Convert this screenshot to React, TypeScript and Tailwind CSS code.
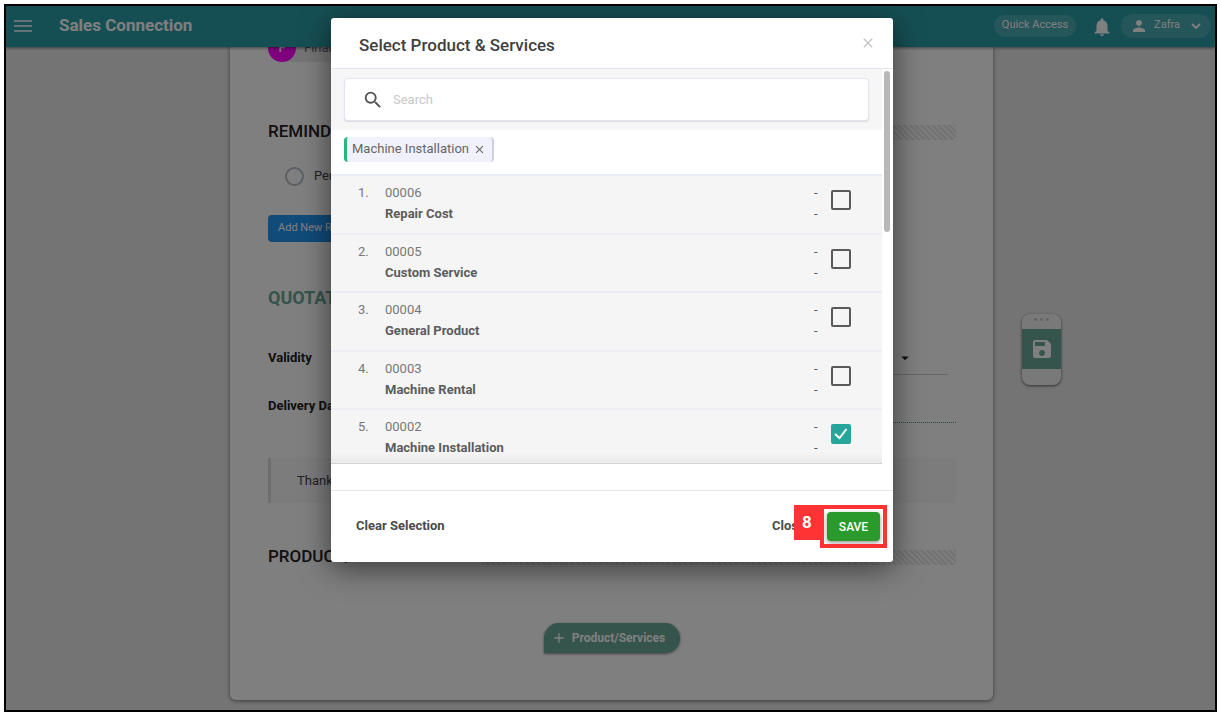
import React, { useState } from "react";
import { MdNotifications, MdPerson, MdSearch, MdSave, MdArrowDropDown, MdAdd, MdClose } from "react-icons/md";

type Item = { code: string; name: string };

const ITEMS: Item[] = [
  { code: "00006", name: "Repair Cost" },
  { code: "00005", name: "Custom Service" },
  { code: "00004", name: "General Product" },
  { code: "00003", name: "Machine Rental" },
  { code: "00002", name: "Machine Installation" },
];

function Header() {
  return (
    <header className="relative z-10 flex h-[41px] shrink-0 items-center bg-[#2a9ea8] pb-[2px] pl-2 pr-1 text-white shadow-[0_1px_3px_rgba(0,0,0,0.5)]">
      <button type="button" aria-label="Menu" className="flex h-8 w-[18px] items-center">
        <svg viewBox="0 0 18 12" className="h-3 w-[18px]" stroke="currentColor" strokeWidth="1.5">
          <path d="M0 1h18M0 6h18M0 11h18" />
        </svg>
      </button>
      <h1 className="ml-[27px] text-[17px] font-bold">Sales Connection</h1>
      <div className="ml-auto flex items-center">
        <button type="button" className="h-[22px] rounded-full bg-white/15 px-2 text-[11px]">Quick Access</button>
        <button type="button" aria-label="Notifications" className="ml-[15px] pt-[2px]">
          <MdNotifications className="size-[22px]" />
        </button>
        <button type="button" className="ml-2 flex h-6 items-center rounded-full bg-white/15 pl-[9px] pr-[10px] text-[11px]">
          <MdPerson className="size-[18px]" />
          <span className="ml-[6px]">Zafra</span>
          <svg viewBox="0 0 10 6" className="ml-[11px] h-[6px] w-[10px]" fill="none" stroke="currentColor" strokeWidth="1.8">
            <path d="M1 1l4 4 4-4" />
          </svg>
        </button>
      </div>
    </header>
  );
}

function SectionTitle({ children }: { children: string }) {
  return (
    <div className="flex h-6 items-center">
      <h2 className="w-[214px] whitespace-nowrap text-[17px] font-medium text-[#222]">{children}</h2>
      <div className="h-[15px] flex-1 bg-[repeating-linear-gradient(45deg,#e6e6e6_0_2px,#fafafa_2px_4px)]" />
    </div>
  );
}

function Page() {
  return (
    <main className="relative flex flex-1 justify-center bg-[#e9e9e9] pl-[2px]">
      <div className="mb-[10px] w-[763px] rounded-b-md bg-white pb-[47px] pl-[38px] pr-[37px] shadow-[0_1px_4px_rgba(0,0,0,0.5)]">
        <div className="flex h-[15px] items-end overflow-hidden">
          <div className="flex h-7 items-center rounded-l-full bg-[#ebebeb] text-[13px] text-[#666]">
            <span className="flex size-7 items-center justify-center rounded-full bg-[#f0f] font-medium text-white">F</span>
            <span className="w-[120px] pl-2">Finance</span>
          </div>
        </div>
        <div className="mt-[58px]">
          <SectionTitle>REMINDER</SectionTitle>
        </div>
        <label className="mt-5 flex h-6 items-center text-[13px] text-[#444]">
          <input type="radio" name="reminder" className="ml-[17px] mr-[10px] size-[19px] appearance-none rounded-full border-2 border-[#b9bec6]" />
          Personal Reminder
        </label>
        <button type="button" className="mt-[27px] block h-[27px] rounded-sm bg-[#2196f3] px-[10px] text-[11px] text-white">Add New Reminder</button>
        <h2 className="mt-11 h-6 text-lg/6 font-bold text-[#68a898]">QUOTATION</h2>
        <div className="mt-[31px] mr-2 flex h-[34px] items-center text-[13px] font-bold text-[#222]">
          <label htmlFor="validity" className="w-[180px]">Validity</label>
          <div className="flex h-full flex-1 items-center border-b border-[#ccc]">
            <select id="validity" className="flex-1 appearance-none bg-transparent font-normal">
              <option>30 Days</option>
            </select>
            <MdArrowDropDown className="mr-[34px] size-[18px]" />
          </div>
        </div>
        <div className="mt-[14px] flex h-[34px] items-center text-[13px] font-bold text-[#222]">
          <label htmlFor="delivery" className="w-[180px]">Delivery Date</label>
          <input id="delivery" className="h-full flex-1 border-b border-dotted border-[#4d9585] bg-transparent font-normal outline-none" />
        </div>
        <p className="mt-[35px] flex h-[45px] items-center border-l-[3px] border-[#dcdcdc] bg-[#f8f8f8] pl-[26px] text-[13px] text-[#444]">Thank you</p>
        <div className="mt-[42px]">
          <SectionTitle>PRODUCT/SERVICES</SectionTitle>
        </div>
        <button type="button" className="mx-auto mt-[54px] flex h-[30px] items-center rounded-full rounded-bl-sm bg-[#68a898] pl-[7px] pr-[15px] text-xs font-bold text-white shadow-[0_1px_3px_rgba(0,0,0,0.5)]">
          <MdAdd className="mr-[5px] size-4" />
          Product/Services
        </button>
      </div>
      <div className="absolute right-[154px] top-[267px] w-[39px] overflow-hidden rounded-lg bg-[#f2f2f2] shadow-[0_1px_3px_rgba(0,0,0,0.6)]">
        <div className="flex h-[15px] items-center justify-center gap-[3px] pb-1">
          <span className="size-[3px] rounded-full bg-[#c4c4c4]" />
          <span className="size-[3px] rounded-full bg-[#c4c4c4]" />
          <span className="size-[3px] rounded-full bg-[#c4c4c4]" />
        </div>
        <button type="button" aria-label="Save quotation" className="flex h-10 w-full items-center justify-center bg-[#68a898] text-white">
          <MdSave className="size-6" />
        </button>
        <div className="h-4" />
      </div>
    </main>
  );
}

function Row({ item, index, checked, onToggle }: { item: Item; index: number; checked: boolean; onToggle: () => void }) {
  return (
    <li className="flex items-start border-b-2 border-[#eceef4] bg-[#f5f5f5] pl-[27px] pr-[31px] pt-[7px] text-[13px] text-[#777] odd:h-[59px] even:h-[58px]">
      <span className="w-[27px] leading-5">{index}.</span>
      <label htmlFor={`item-${item.code}`} className="flex-1">
        <span className="block leading-5">{item.code}</span>
        <span className="block font-bold leading-[22px] text-[#5c5c5c]">{item.name}</span>
      </label>
      <span className="w-[17px] text-[#555]">
        <span className="block leading-5">-</span>
        <span className="block leading-[22px]">-</span>
      </span>
      <span className="relative mt-[7px] size-5">
        <input
          id={`item-${item.code}`}
          type="checkbox"
          checked={checked}
          onChange={onToggle}
          className="block size-5 appearance-none rounded-[2px] border-2 border-[#5a5a5a] checked:border-[#26a69a] checked:bg-[#26a69a]"
        />
        {checked && (
          <svg viewBox="0 0 20 20" className="pointer-events-none absolute inset-0 size-5" fill="none" stroke="#fff" strokeWidth="2">
            <path d="M4 10l4.500 4L15.500 5" />
          </svg>
        )}
      </span>
    </li>
  );
}

function Dialog() {
  const [selected, setSelected] = useState<string[]>(["00002"]);
  const toggle = (code: string) =>
    setSelected((s) => (s.includes(code) ? s.filter((c) => c !== code) : [...s, code]));

  return (
    <div role="dialog" aria-label="Select Product & Services" className="ml-[3px] w-[562px] rounded-[3px] bg-white shadow-[0_6px_30px_rgba(0,0,0,0.55)]">
      <div className="flex h-[51px] items-center border-b border-[#dfe6f2] pl-7 pr-[17px]">
        <h2 className="pt-[6px] text-[17px] font-medium text-[#3f3f3f]">Select Product &amp; Services</h2>
        <button type="button" aria-label="Close dialog" className="ml-auto text-[#c4c4c4]">
          <MdClose className="size-4" />
        </button>
      </div>
      <div className="flex pb-[26px]">
        <div className="flex-1">
          <div className="bg-[#f6f6f6] px-[13px] py-[9px]">
            <label className="flex h-[43px] items-center rounded-sm border border-[#e2e6f0] bg-white pl-[17px] shadow-[0_1px_1px_rgba(0,0,0,0.12)]">
              <MdSearch className="size-[22px] text-[#555]" />
              <input type="text" aria-label="Search" placeholder="Search" className="ml-[9px] flex-1 text-[13px] outline-none placeholder:text-[#c8c8c8]" />
            </label>
          </div>
          <div className="flex h-[46px] items-start border-b-2 border-[#e9eef5] px-[13px] pt-[7px]">
            {ITEMS.filter((i) => selected.includes(i.code)).map((i) => (
              <span key={i.code} className="flex h-[25px] items-center rounded-sm border-l-[3px] border-r-2 border-l-[#2bb47d] border-r-[#cdcbee] bg-[#f1f1fb] pb-[2px] pl-[5px] pr-[6px] text-[13px] text-[#666]">
                {i.name}
                <button type="button" aria-label={`Remove ${i.name}`} onClick={() => toggle(i.code)} className="ml-1 pt-[2px]">
                  <MdClose className="size-[13px]" />
                </button>
              </span>
            ))}
          </div>
          <div className="relative">
            <ul className="h-[288px] overflow-hidden border-b border-[#ddd]">
              {ITEMS.map((item, n) => (
                <Row key={item.code} item={item} index={n + 1} checked={selected.includes(item.code)} onToggle={() => toggle(item.code)} />
              ))}
            </ul>
            <div className="pointer-events-none absolute inset-x-0 bottom-0 h-3 bg-linear-to-t from-black/5 to-transparent" />
          </div>
        </div>
        <div className="w-[11px] px-[2px] pt-[2px]">
          <div className="h-[161px] w-[6px] rounded-full bg-[#b8b8b8]" />
        </div>
      </div>
      <div className="flex h-[72px] items-center border-t border-[#dfe6ee] pl-[25px] pr-[13px] text-[13px] font-bold text-[#4a4a4a]">
        <button type="button" onClick={() => setSelected([])} className="pb-[2px]">Clear Selection</button>
        <button type="button" className="ml-auto pb-[2px]">Close</button>
        <div className="relative ml-[22px]">
          <button type="button" className="h-[29px] w-[53px] rounded-sm bg-[#2a9a2c] text-xs font-medium text-white shadow-[0_2px_5px_rgba(0,0,0,0.4)]">SAVE</button>
          <span className="pointer-events-none absolute -inset-[7px] border-4 border-[#ff3333]" />
          <span className="absolute -left-[33px] -top-[7px] flex h-[35px] w-[27px] items-center justify-center bg-[#ff3333] pr-px text-[17px] font-bold text-white">8</span>
        </div>
      </div>
    </div>
  );
}

export default function App() {
  return (
    <div className="min-h-screen bg-white pb-1 pl-1 pr-[3px] pt-1 font-['Roboto','Liberation_Sans',sans-serif]">
      <div className="relative border-2 border-black">
        <div className="flex flex-col">
          <Header />
          <Page />
        </div>
        <div className="absolute inset-0 z-20 flex items-start justify-center overflow-hidden bg-black/50 pt-3">
          <Dialog />
        </div>
      </div>
    </div>
  );
}
